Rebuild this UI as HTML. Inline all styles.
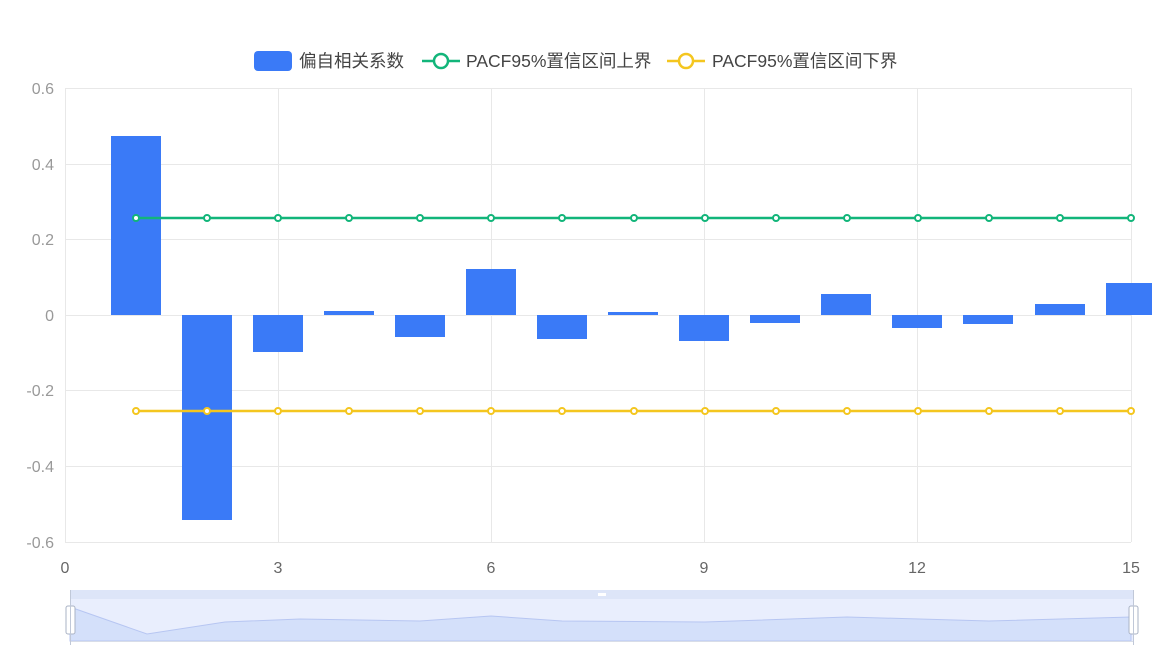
<!DOCTYPE html><html><head><meta charset="utf-8"><style>
body{margin:0;width:1152px;height:654px;overflow:hidden;background:#fff;font-family:"Liberation Sans","Noto Sans CJK SC",sans-serif}
</style></head><body>
<svg width="1152" height="654" xmlns="http://www.w3.org/2000/svg" font-family="Liberation Sans, Noto Sans CJK SC, sans-serif">
<g stroke="#e8e8e8" stroke-width="1">
<line x1="65" y1="88.5" x2="1131" y2="88.5"/><line x1="65" y1="164.5" x2="1131" y2="164.5"/><line x1="65" y1="239.5" x2="1131" y2="239.5"/><line x1="65" y1="390.5" x2="1131" y2="390.5"/><line x1="65" y1="466.5" x2="1131" y2="466.5"/><line x1="65" y1="542.5" x2="1131" y2="542.5"/>
<line x1="65.5" y1="88" x2="65.5" y2="542"/><line x1="278.5" y1="88" x2="278.5" y2="542"/><line x1="491.5" y1="88" x2="491.5" y2="542"/><line x1="704.5" y1="88" x2="704.5" y2="542"/><line x1="917.5" y1="88" x2="917.5" y2="542"/><line x1="1131.5" y1="88" x2="1131.5" y2="542"/>
<line x1="65" y1="315.5" x2="1131" y2="315.5"/>
</g>
<g fill="#999" font-size="16" text-anchor="end">
<text x="54" y="94">0.6</text><text x="54" y="170">0.4</text><text x="54" y="245">0.2</text><text x="54" y="321">0</text><text x="54" y="396">-0.2</text><text x="54" y="472">-0.4</text><text x="54" y="548">-0.6</text>
</g>
<g fill="#666" font-size="16" text-anchor="middle">
<text x="65" y="573">0</text><text x="278" y="573">3</text><text x="491" y="573">6</text><text x="704" y="573">9</text><text x="917" y="573">12</text><text x="1131" y="573">15</text>
</g>
<g fill="#3a7af7">
<rect x="111" y="136" width="50" height="179"/>
<rect x="182" y="315" width="50" height="205"/>
<rect x="253" y="315" width="50" height="37"/>
<rect x="324" y="311" width="50" height="4"/>
<rect x="395" y="315" width="50" height="22"/>
<rect x="466" y="269" width="50" height="46"/>
<rect x="537" y="315" width="50" height="24"/>
<rect x="608" y="312" width="50" height="3"/>
<rect x="679" y="315" width="50" height="26"/>
<rect x="750" y="315" width="50" height="8"/>
<rect x="821" y="294" width="50" height="21"/>
<rect x="892" y="315" width="50" height="13"/>
<rect x="963" y="315" width="50" height="9"/>
<rect x="1035" y="304" width="50" height="11"/>
<rect x="1106" y="283" width="50" height="32"/>
</g>
<g stroke="#12b57a" stroke-width="2.5" fill="#fff">
<line x1="136" y1="218" x2="1131" y2="218"/>
</g>
<g stroke="#f4c61f" stroke-width="2.5" fill="#fff">
<line x1="136" y1="411" x2="1131" y2="411"/>
</g>
<g stroke="#12b57a" stroke-width="2" fill="#fff">
<circle cx="136" cy="218" r="3"/><circle cx="207" cy="218" r="3"/><circle cx="278" cy="218" r="3"/><circle cx="349" cy="218" r="3"/><circle cx="420" cy="218" r="3"/><circle cx="491" cy="218" r="3"/><circle cx="562" cy="218" r="3"/><circle cx="634" cy="218" r="3"/><circle cx="705" cy="218" r="3"/><circle cx="776" cy="218" r="3"/><circle cx="847" cy="218" r="3"/><circle cx="918" cy="218" r="3"/><circle cx="989" cy="218" r="3"/><circle cx="1060" cy="218" r="3"/><circle cx="1131" cy="218" r="3"/>
</g>
<g stroke="#f4c61f" stroke-width="2" fill="#fff">
<circle cx="136" cy="411" r="3"/><circle cx="207" cy="411" r="3"/><circle cx="278" cy="411" r="3"/><circle cx="349" cy="411" r="3"/><circle cx="420" cy="411" r="3"/><circle cx="491" cy="411" r="3"/><circle cx="562" cy="411" r="3"/><circle cx="634" cy="411" r="3"/><circle cx="705" cy="411" r="3"/><circle cx="776" cy="411" r="3"/><circle cx="847" cy="411" r="3"/><circle cx="918" cy="411" r="3"/><circle cx="989" cy="411" r="3"/><circle cx="1060" cy="411" r="3"/><circle cx="1131" cy="411" r="3"/>
</g>
<rect x="254" y="51" width="38" height="20" rx="4" fill="#3a7af7"/>
<text x="299" y="67" font-size="17.5" fill="#444">偏自相关系数</text>
<line x1="422" y1="61" x2="460" y2="61" stroke="#12b57a" stroke-width="2.5"/>
<circle cx="441" cy="61" r="7" fill="#fff" stroke="#12b57a" stroke-width="2.5"/>
<text x="466" y="67" font-size="17.5" fill="#444">PACF95%置信区间上界</text>
<line x1="667" y1="61" x2="705" y2="61" stroke="#f4c61f" stroke-width="2.5"/>
<circle cx="686" cy="61" r="7" fill="#fff" stroke="#f4c61f" stroke-width="2.5"/>
<text x="712" y="67" font-size="17.5" fill="#444">PACF95%置信区间下界</text>
<rect x="70" y="590" width="1063" height="9" fill="#dde5f8"/>
<rect x="70" y="599" width="1063" height="42" fill="#e9eefd"/>
<path d="M70 607 L147 634 L225 622 L300 619 L420 621 L491 616 L562 621 L705 622 L847 617 L989 621 L1131 617 L1131 641 L70 641Z" fill="#d4e0fa" stroke="#b7c6f2" stroke-width="1"/>
<line x1="70" y1="641.5" x2="1133" y2="641.5" stroke="#d8dde8"/>
<rect x="66" y="606" width="9" height="28" rx="2" fill="#fff" stroke="#aab3c5"/>
<rect x="1129" y="606" width="9" height="28" rx="2" fill="#fff" stroke="#aab3c5"/>
<line x1="70.5" y1="590" x2="70.5" y2="645" stroke="#c0c8d8"/>
<line x1="1133.5" y1="590" x2="1133.5" y2="645" stroke="#c0c8d8"/>
<rect x="598" y="593" width="8" height="3" fill="#fff"/>
</svg>
</body></html>
